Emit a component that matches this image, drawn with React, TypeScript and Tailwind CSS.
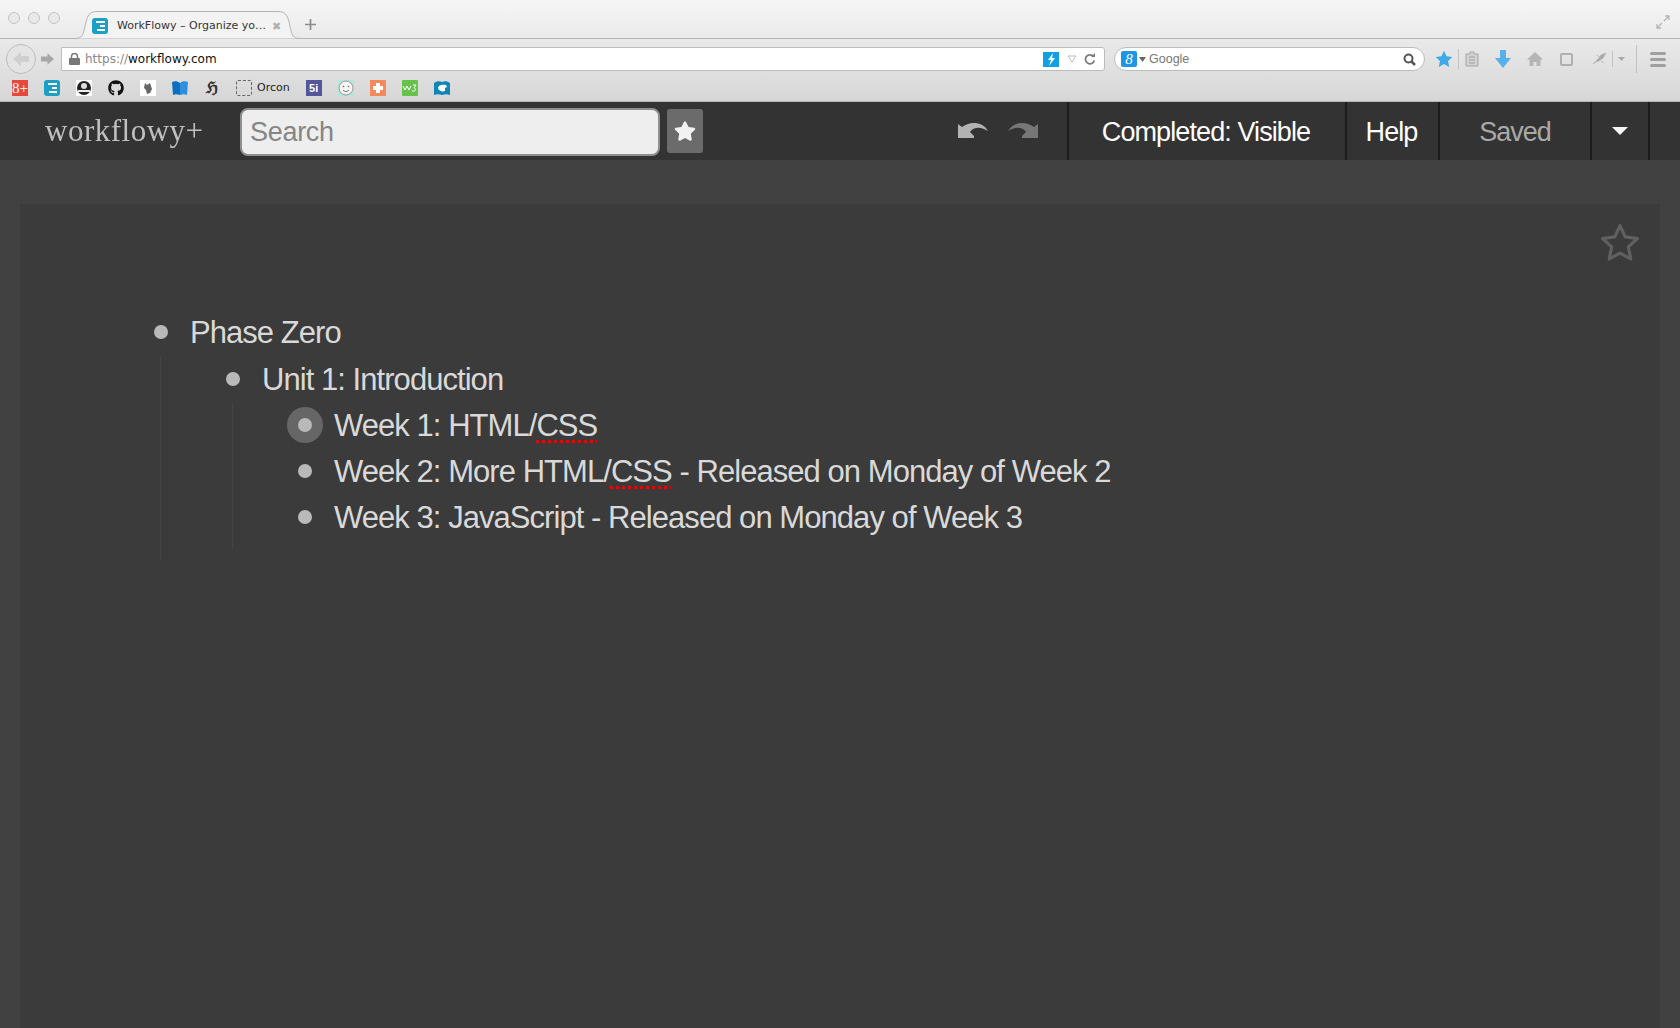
import { FaGithub, FaStar } from "react-icons/fa";

const outline = [
  {
    text: "Phase Zero",
    children: [
      {
        text: "Unit 1: Introduction",
        children: [
          { text: "Week 1: HTML/", typo: "CSS", halo: true },
          { text: "Week 2: More HTML/", typo: "CSS", rest: " - Released on Monday of Week 2" },
          { text: "Week 3: JavaScript - Released on Monday of Week 3" },
        ],
      },
    ],
  },
];

type Item = {
  text: string;
  typo?: string;
  rest?: string;
  halo?: boolean;
  children?: Item[];
};

function Row({ item, top }: { item: Item; top?: boolean }) {
  return (
    <div>
      <div className={top ? "mb-[1px] flex h-[46px] items-center" : "flex h-[46px] items-center"}>
        <div className="relative flex w-[36px] shrink-0 justify-center">
          {item.halo && <div className="absolute top-[-11px] h-[36px] w-[36px] rounded-full bg-[#666666]" />}
          <div className="relative h-[14px] w-[14px] rounded-full bg-[#b9b9b9]" />
        </div>
        <div className="ml-[11px] whitespace-pre pt-[2px] text-[31px] tracking-[-0.95px] text-[#d9d9d9]">
          {item.text}
          {item.typo && (
            <span className="underline decoration-[#f00000] decoration-dotted decoration-[3px] underline-offset-[4px]">
              {item.typo}
            </span>
          )}
          {item.rest}
        </div>
      </div>
      {item.children && (
        <div className="ml-[17px] border-l border-[#444444] pb-[10px] pl-[54px]">
          {item.children.map((c) => (
            <Row key={c.text} item={c} />
          ))}
        </div>
      )}
    </div>
  );
}

function Favicon() {
  return (
    <div className="flex h-4 w-4 flex-col items-end justify-center gap-[2px] rounded-[3px] bg-[#1b9fc4] pr-[3px]">
      <div className="h-[2px] w-[9px] bg-white" />
      <div className="h-[2px] w-[5px] bg-white" />
      <div className="h-[2px] w-[8px] bg-white" />
    </div>
  );
}

function Bookmarks() {
  return (
    <div className="flex h-[23px] items-center gap-4 border-b border-[#b5b5b5] pb-[4px] pl-3">
      <div className="flex h-4 w-4 items-center justify-center bg-[#e8483c] font-['Liberation_Serif',serif] text-[15px] leading-none text-white">8+</div>
      <Favicon />
      <svg width="16" height="16" viewBox="0 0 16 16">
        <rect width="16" height="16" fill="#fff" />
        <circle cx="8" cy="8" r="7" fill="#222" />
        <circle cx="8" cy="6" r="3" fill="#ddd" />
        <path d="M2 10h12v2H2z" fill="#eee" />
      </svg>
      <FaGithub className="h-4 w-4 text-[#111111]" />
      <svg width="16" height="16" viewBox="0 0 16 16">
        <rect width="16" height="16" fill="#fff" />
        <path d="M5 3l2 2 3-2 1 3 1 3-2 4-3 1-1-4-2-2z" fill="#666" />
      </svg>
      <svg width="16" height="16" viewBox="0 0 16 16">
        <path d="M0 2c3-1 5-1 8 1v12c-3-1-5-1-7 0z" fill="#0a6fc2" />
        <path d="M8 3c2-2 5-2 8-1l-1 13c-2-1-4-1-7 0z" fill="#2f8fdd" />
      </svg>
      <div className="w-4 text-center font-['DejaVu_Serif',serif] text-[16px] font-bold leading-none text-[#333333]">ℌ</div>
      <div className="flex items-center gap-[5px]">
        <div className="h-[16px] w-[16px] rounded-[2px] border border-dashed border-[#666666]" />
        <span className="font-['DejaVu_Sans',sans-serif] text-[11px] text-[#222222]">Orcon</span>
      </div>
      <div className="flex h-4 w-4 items-center justify-center bg-[#55559a] font-['Liberation_Sans',sans-serif] text-[11px] font-bold text-white">5i</div>
      <svg width="16" height="16" viewBox="0 0 16 16">
        <rect width="16" height="16" fill="#b5e6dc" />
        <circle cx="8" cy="8" r="7" fill="#f4f4f4" stroke="#999" />
        <circle cx="5.500" cy="6.500" r="0.800" fill="#666" />
        <circle cx="10.500" cy="6.500" r="0.800" fill="#666" />
        <path d="M5 10c2 2 4 2 6 0" fill="none" stroke="#666" />
      </svg>
      <div className="flex h-4 w-4 items-center justify-center bg-[#f58a5e]">
        <svg width="10" height="10" viewBox="0 0 10 10"><path d="M3 0h4v3h3v4H7v3H3V7H0V3h3z" fill="#fff" /></svg>
      </div>
      <svg width="16" height="16" viewBox="0 0 16 16">
        <rect width="16" height="16" rx="1" fill="#66c24a" />
        <path d="M1 6l2 4 2-4 2 4 2-4M11 5h3l-2 3c2 0 2 3 0 3h-2" fill="none" stroke="#fff" />
      </svg>
      <svg width="16" height="16" viewBox="0 0 16 16">
        <path d="M0 3c3-2 5-2 8-1 3-1 5-1 8 1v12c-3-1-5-1-8 0-3-1-5-1-8 0z" fill="#0f86b8" />
        <path d="M4 8c0-3 5-4 8-3l1 2-2 1v3c-3 1-6 0-7-3z" fill="#fff" />
      </svg>
    </div>
  );
}

function Toolbar() {
  return (
    <div className="flex h-[40px] items-center">
      <div className="relative ml-[6px] flex h-[30px] w-[30px] shrink-0 items-center justify-center rounded-full border border-[#bdbdbd] bg-[#e4e4e4]">
        <svg width="16" height="14" viewBox="0 0 16 14"><path d="M8 0v4h8v6H8v4L0 7z" fill="#cfcfcf" /></svg>
      </div>
      <svg className="ml-[5px] shrink-0" width="13" height="12" viewBox="0 0 16 14"><path d="M8 0v4H0v6h8v4l8-7z" fill="#a8a8a8" /></svg>
      <div className="ml-[7px] flex h-[24px] w-[1044px] shrink-0 items-center rounded-r-[3px] border border-[#bcbcbc] bg-white pl-[7px] pr-[6px] font-['DejaVu_Sans',sans-serif] text-[12px]">
        <svg width="11" height="12" viewBox="0 0 11 12">
          <rect y="5" width="11" height="7" rx="1" fill="#777" />
          <path d="M2.500 5V3.500a3 3 0 0 1 6 0V5" fill="none" stroke="#777" strokeWidth="1.500" />
        </svg>
        <span className="ml-[5px] text-[#8a8a8a]">https://</span>
        <span className="text-[#111111]">workflowy.com</span>
        <div className="ml-auto mr-[2px] flex h-[15px] w-[16px] items-center justify-center bg-[#12a0e4]">
          <svg width="9" height="13" viewBox="0 0 9 13"><path d="M6 0L1 7h3l-2 6 6-8H5z" fill="#fff" /></svg>
        </div>
        <svg className="ml-[6px]" width="10" height="8" viewBox="0 0 10 8"><path d="M1 1h8L5 7z" fill="none" stroke="#bbb" /></svg>
        <svg className="ml-[7px] mr-[2px]" width="12" height="12" viewBox="0 0 12 12">
          <path d="M9.500 3.500a4.500 4.500 0 1 0 .8 4" fill="none" stroke="#777" strokeWidth="1.700" />
          <path d="M7 4h4V0z" fill="#777" />
        </svg>
      </div>
      <div className="ml-[9px] flex h-[24px] w-[311px] shrink-0 items-center rounded-full border border-[#bcbcbc] bg-white pl-[6px] pr-[8px] font-['Liberation_Sans',sans-serif] text-[12.500px] text-[#777777]">
        <div className="flex h-[16px] w-[16px] items-center justify-center rounded-[2px] bg-[#1e96e8] font-['Liberation_Serif',serif] text-[15px] italic leading-none text-white">8</div>
        <svg className="ml-[2px]" width="7" height="5" viewBox="0 0 7 5"><path d="M0 0h7L3.500 5z" fill="#666" /></svg>
        <span className="ml-[3px]">Google</span>
        <svg className="ml-auto" width="13" height="13" viewBox="0 0 13 13">
          <circle cx="5.500" cy="5.500" r="4" fill="none" stroke="#555" strokeWidth="2" />
          <path d="M8.500 8.500L12 12" stroke="#555" strokeWidth="2.500" />
        </svg>
      </div>
      <svg className="ml-[10px] shrink-0" width="18" height="18" viewBox="0 0 24 24"><path d="M12 1l3.400 7.300 7.600 1-5.600 5.400 1.500 7.800L12 18.700l-6.900 3.800 1.500-7.800L1 9.300l7.600-1z" fill="#3fa9e8" /></svg>
      <div className="ml-[5px] h-[20px] w-px shrink-0 bg-[#c2c2c2]" />
      <svg className="ml-[6px] shrink-0" width="14" height="16" viewBox="0 0 14 16">
        <path d="M5 1h4v2h4v12H1V3h4z" fill="#d2d2d2" stroke="#a5a5a5" />
        <path d="M4 6h6M4 9h6M4 12h6" stroke="#a0a0a0" />
      </svg>
      <svg className="ml-[16px] shrink-0" width="16" height="18" viewBox="0 0 16 18"><path d="M5 0h6v8h5l-8 10L0 8h5z" fill="#58b0ea" /></svg>
      <svg className="ml-[16px] shrink-0" width="16" height="16" viewBox="0 0 16 16">
        <path d="M8 1L0 8.500h2.500V15h4v-4h3v4h4V8.500H16z" fill="#b5b5b5" />
      </svg>
      <div className="ml-[17px] h-[13px] w-[13px] shrink-0 rounded-[2px] border-2 border-[#b0b0b0]" />
      <svg className="ml-[19px] shrink-0" width="15" height="14" viewBox="0 0 15 14">
        <path d="M1 12l5-5 3-4 5-2-3 5-4 3-3 1zM5 3l3 3M9 9l3 2" fill="#a9a9a9" stroke="#bbb" />
      </svg>
      <div className="ml-[5px] h-[16px] w-px shrink-0 bg-[#c2c2c2]" />
      <svg className="ml-[5px] shrink-0" width="7" height="4" viewBox="0 0 7 4"><path d="M0 0h7L3.500 4z" fill="#aaa" /></svg>
      <div className="ml-[11px] h-[28px] w-px shrink-0 bg-[#c2c2c2]" />
      <div className="ml-[13px] flex w-[16px] shrink-0 flex-col gap-[3px]">
        <div className="h-[3px] rounded-full bg-[#a0a0a0]" />
        <div className="h-[3px] rounded-full bg-[#a0a0a0]" />
        <div className="h-[3px] rounded-full bg-[#a0a0a0]" />
      </div>
    </div>
  );
}

function TabStrip() {
  return (
    <div className="flex h-[39px] items-end border-b border-[#b4b4b4]">
      <div className="mb-[14px] ml-[8px] flex gap-[8px]">
        <div className="h-[12px] w-[12px] rounded-full border border-[#c4c4c4] bg-[#e9e9e9]" />
        <div className="h-[12px] w-[12px] rounded-full border border-[#c4c4c4] bg-[#e9e9e9]" />
        <div className="h-[12px] w-[12px] rounded-full border border-[#c4c4c4] bg-[#e9e9e9]" />
      </div>
      <div className="relative ml-[15px] flex h-[27px] w-[225px] items-center pt-[3px]">
        <svg className="absolute inset-0" width="225" height="28" viewBox="0 0 225 28">
          <path d="M0 27.500c7 0 8-3 10-12C12 5 14 .5 22 .5h181c8 0 10 4.500 12 15 2 9 3 12 10 12" fill="#f3f3f3" stroke="#b4b4b4" />
        </svg>
        <div className="relative ml-[17px]"><Favicon /></div>
        <span className="relative ml-[9px] font-['DejaVu_Sans',sans-serif] text-[11px] text-[#333333]">WorkFlowy – Organize yo…</span>
        <span className="relative ml-[6px] font-['DejaVu_Sans',sans-serif] text-[11px] leading-none text-[#b0b0b0]">✖</span>
      </div>
      <svg className="mb-[8px] ml-[5px]" width="11" height="11" viewBox="0 0 11 11"><path d="M5.500 0v11M0 5.500h11" stroke="#8a8a8a" strokeWidth="1.700" /></svg>
      <svg className="mb-[9px] ml-auto mr-[10px]" width="14" height="14" viewBox="0 0 14 14">
        <path d="M8 6l5-5M9 1h4v4M6 8l-5 5M1 9v4h4" fill="none" stroke="#b5b5b5" strokeWidth="1.300" />
      </svg>
    </div>
  );
}

function TopBar() {
  return (
    <div className="flex h-[58px] items-center bg-[#333333] font-['Liberation_Sans',sans-serif]">
      <div className="ml-[45px] w-[195px] shrink-0 font-['Liberation_Serif',serif] text-[31px] tracking-[0.5px] text-[#c0c0c0] blur-[0.5px]">workflowy+</div>
      <input
        placeholder="Search"
        className="mt-[2px] h-[48px] w-[420px] shrink-0 rounded-[8px] border-2 border-[#8f8f8f] bg-[#eeeeee] px-[8px] text-[27px] tracking-[-0.3px] placeholder:text-[#858585]"
      />
      <div className="ml-[7px] flex h-[44px] w-[36px] shrink-0 items-center justify-center rounded-[3px] bg-[#6b6b6b]">
        <FaStar className="h-[22px] w-[22px] text-[#f2f2f2]" />
      </div>
      <svg className="ml-[255px] shrink-0" width="30" height="18" viewBox="0 0 30 18">
        <path d="M0 2l4 3C10 0 24-2 30 9c-6-4-14-5-18 1l4 4 0 2H0z" fill="#b3b3b3" />
      </svg>
      <svg className="ml-[20px] shrink-0" width="30" height="18" viewBox="0 0 30 18">
        <path d="M30 2l-4 3C20 0 6-2 0 9c6-4 14-5 18 1l-4 4 0 2h16z" fill="#777777" />
      </svg>
      <div className="ml-[29px] flex h-full w-[280px] shrink-0 items-center justify-center border-x-2 border-[#1c1c1c] pr-[2px] pt-[2px] text-[27px] tracking-[-0.9px] text-white">Completed: Visible</div>
      <div className="flex h-full w-[93px] shrink-0 items-center justify-center border-r-2 border-[#1c1c1c] pr-[2px] pt-[2px] text-[27px] tracking-[-0.9px] text-white">Help</div>
      <div className="flex h-full w-[152px] shrink-0 items-center justify-center border-r-2 border-[#1c1c1c] pt-[2px] text-[27px] tracking-[-1px] text-[#a9a9a9]">Saved</div>
      <div className="flex h-full w-[58px] shrink-0 items-center justify-center border-r-2 border-[#1c1c1c]">
        <svg width="16" height="8" viewBox="0 0 16 8"><path d="M0 0h16L8 8z" fill="#f5f5f5" /></svg>
      </div>
    </div>
  );
}

export default function App() {
  return (
    <div className="flex h-[1028px] flex-col overflow-hidden bg-[#414141]">
      <div className="h-[102px] shrink-0 bg-gradient-to-b from-[#f6f6f6] to-[#d6d6d6]">
        <TabStrip />
        <Toolbar />
        <Bookmarks />
      </div>
      <TopBar />
      <div className="mx-5 mt-[44px] flex-1 bg-[#3b3b3b] pl-[123px] pt-[105px] font-['Liberation_Sans',sans-serif]">
        <svg className="absolute right-[39px] top-[223px]" width="42" height="40" viewBox="0 0 24 23">
          <path d="M12 1.500l3 6.500 7 .9-5.200 4.800 1.400 7L12 17.300l-6.200 3.400 1.400-7L2 8.900 9 8z" fill="none" stroke="#606060" strokeWidth="1.800" strokeLinejoin="round" />
        </svg>
        {outline.map((item) => (
          <Row key={item.text} item={item} top />
        ))}
      </div>
    </div>
  );
}
